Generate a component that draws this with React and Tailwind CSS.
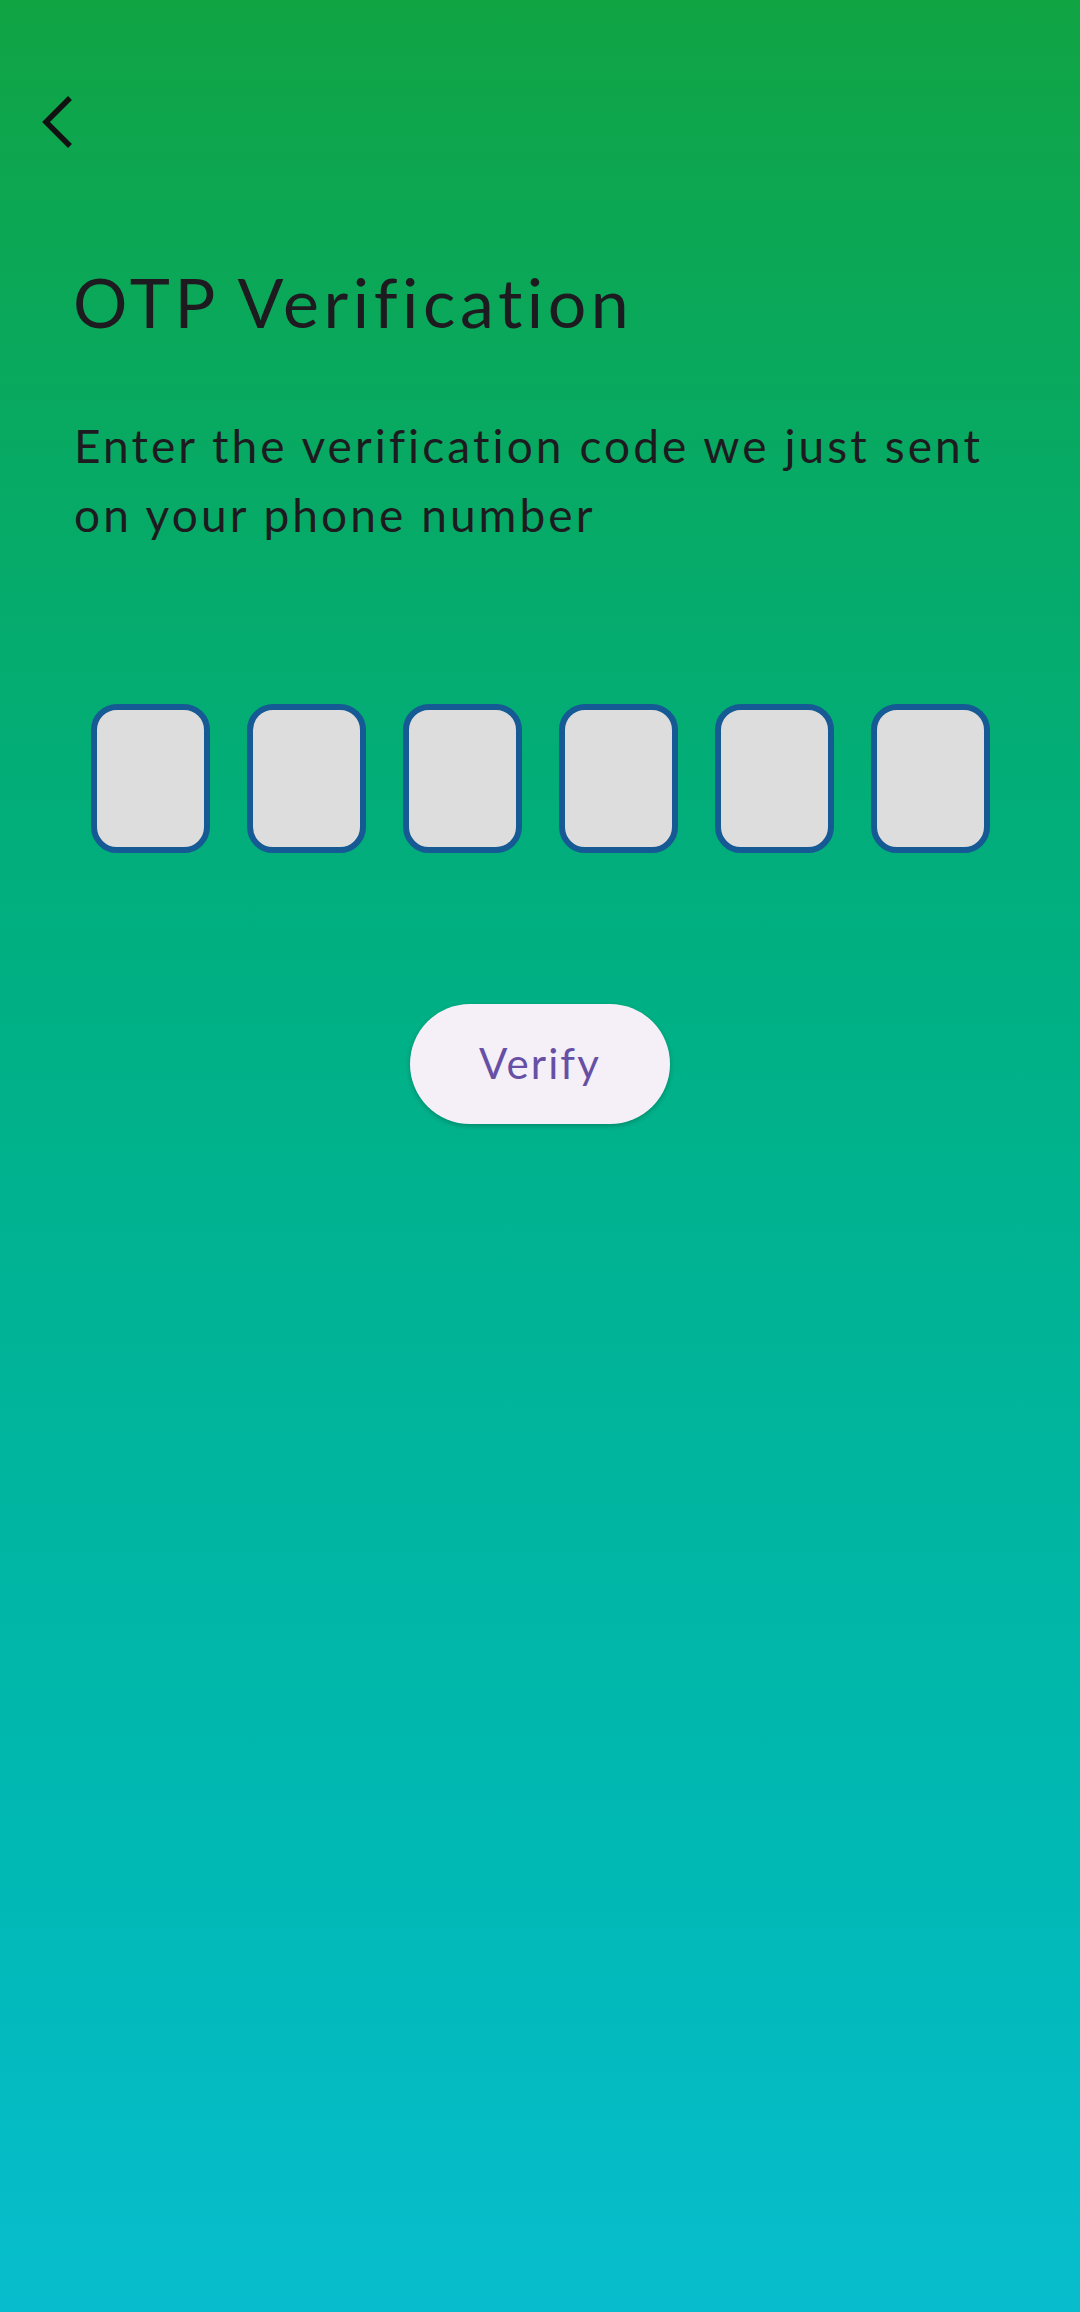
export default function App() {
  const boxes = [0, 1, 2, 3, 4, 5];

  return (
    <div
      className="min-h-screen w-full flex flex-col bg-gradient-to-b from-[#10a443] to-[#07bdcd] text-[#1d1b20]"
      style={{ fontFamily: "Lato, 'Open Sans', sans-serif" }}
    >
      {/* Back */}
      <div className="pl-[40px] pt-[96px]">
        <svg width="36" height="52" viewBox="0 0 36 52" fill="none">
          <polyline
            points="30,2 6,26 30,50"
            stroke="#111111"
            strokeWidth="5.5"
            strokeLinecap="butt"
            strokeLinejoin="miter"
          />
        </svg>
      </div>

      {/* Heading */}
      <h1 className="mt-[113px] pl-[73px] text-[68px] leading-[1.2] font-normal tracking-[0.067em]">
        OTP Verification
      </h1>
      <p className="mt-[68px] pl-[74px] pr-[20px] text-[46px] leading-[69px] tracking-[0.067em] whitespace-nowrap">
        Enter the verification code we just sent
        <br />
        on your phone number
      </p>

      {/* OTP inputs */}
      <div className="mt-[155px] flex justify-center gap-[37px]">
        {boxes.map((i) => (
          <div
            key={i}
            className="w-[119px] h-[149px] rounded-[26px] border-[6px] border-[#155a94] bg-[#dddddd]"
          />
        ))}
      </div>

      {/* Verify */}
      <div className="mt-[151px] flex justify-center">
        <button className="w-[260px] h-[120px] rounded-full bg-[#f5eff8] text-[#6750a4] text-[42px] tracking-[0.05em] shadow-[0_2px_5px_rgba(0,0,0,0.22)] flex items-center justify-center">
          Verify
        </button>
      </div>
    </div>
  );
}
